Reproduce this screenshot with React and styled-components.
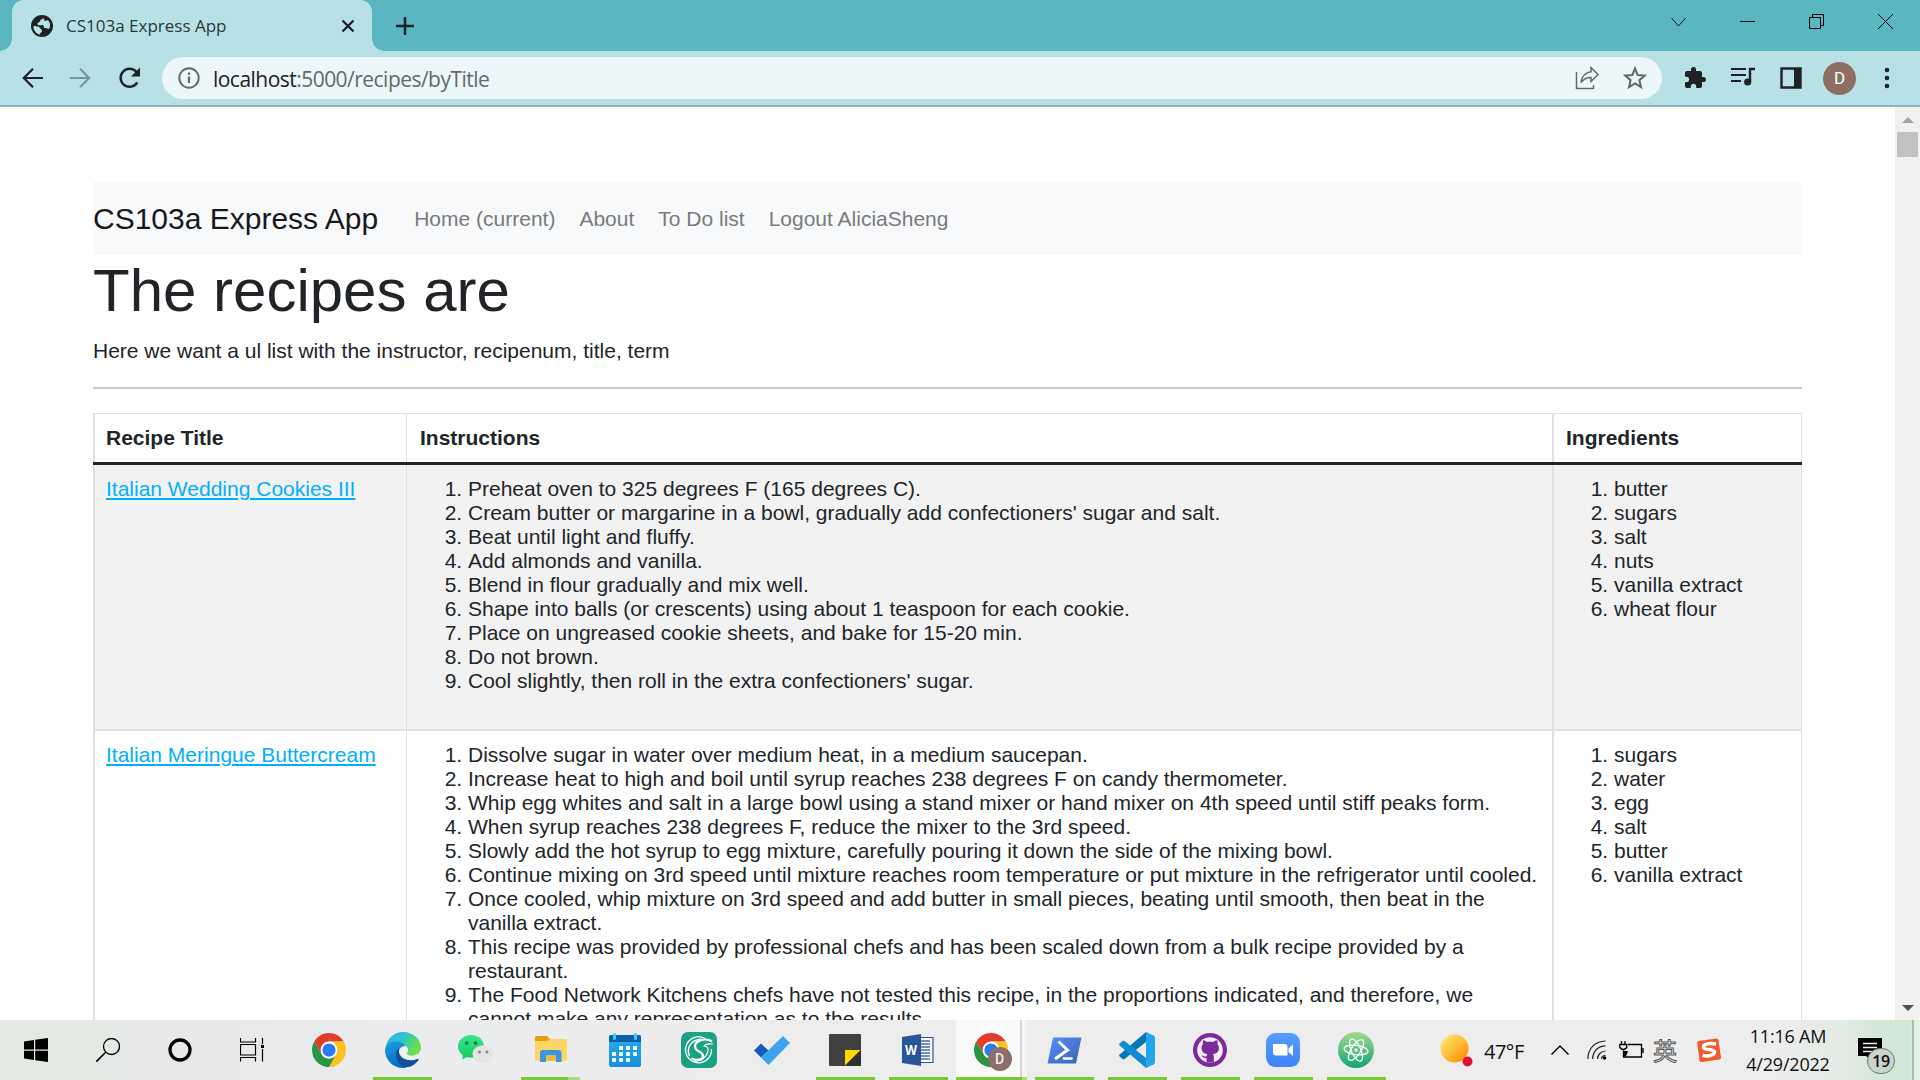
import React from "react";
import styled, { createGlobalStyle } from "styled-components";

const sans = `"Liberation Sans", Arial, sans-serif`;
const ui = `"Open Sans", "Noto Sans", sans-serif`;

const Global = createGlobalStyle`
  *, *::before, *::after { box-sizing: border-box; }
  html, body { margin: 0; padding: 0; overflow: hidden; background: #fff; }
`;

const Screen = styled.div`
  width: 1920px; height: 1080px; display: flex; flex-direction: column; overflow: hidden;
  color: #212529; font-family: ${sans};
`;

/* browser */
const TabStrip = styled.div`
  flex: none; height: 51px; background: #5ab7c1; display: flex; align-items: stretch; padding-left: 12px;
`;
const Tab = styled.div`
  position: relative; width: 360px; background: #b7e1e5; border-radius: 12px 12px 0 0;
  display: flex; align-items: center; padding: 0 17px 0 19px;
  &::before, &::after {
    content: ""; position: absolute; bottom: 0; width: 12px; height: 12px;
  }
  &::before { left: -12px; background: radial-gradient(circle at 0 0, transparent 11.5px, #b7e1e5 12px); }
  &::after { right: -12px; background: radial-gradient(circle at 100% 0, transparent 11.5px, #b7e1e5 12px); }
`;
const TabTitle = styled.span`
  flex: 1; margin-left: 13px; font: 17px/22px ${ui}; color: #26393c; white-space: nowrap;
`;
const NewTab = styled.div`margin-left: 23px; display: flex; align-items: center;`;
const WindowButtons = styled.div`
  margin-left: auto; display: flex; height: 43px; align-items: center; padding-right: 27px; gap: 54px;
`;
const Toolbar = styled.div`
  flex: none; height: 56px; background: #b7e1e5; border-bottom: 2px solid #90b3b7;
  display: flex; align-items: center; padding-left: 21px;
`;
const NavIcons = styled.div`display: flex; width: 141px; gap: 27px; align-items: center;`;
const Omnibox = styled.div`
  width: 1500px; height: 42px; border-radius: 21px; background: #ebf7f8;
  display: flex; align-items: center; padding: 0 15px 0 16px;
`;
const Url = styled.span`
  flex: 1; margin-left: 13px; font: 21px/28px ${ui}; letter-spacing: -0.53px; color: #5f6b6d; padding-top: 1px;
  b { font-weight: 400; color: #202124; }
`;
const Actions = styled.div`display: flex; align-items: center; gap: 24px; margin-left: 21px;`;
const Avatar = styled.span`
  width: 33px; height: 33px; border-radius: 50%; background: #8d6e63; color: #fff;
  display: grid; place-items: center; font: 17px/1 Roboto, sans-serif;
`;

/* page */
const Viewport = styled.div`flex: 1; min-height: 0; display: flex; overflow: hidden;`;
const Page = styled.main`
  flex: 1; height: 100%; overflow: hidden; padding: 75px 93px 0; font-size: 21px; line-height: 24px;
`;
const Navbar = styled.nav`
  height: 73px; background: #f7f9fb; display: flex; align-items: center; gap: 24px;
  color: #797b7d; white-space: nowrap;
`;
const Brand = styled.span`font-size: 30px; color: #17191b; margin-right: 12px;`;
const Title = styled.h1`margin: 0; font-size: 60px; font-weight: 400; line-height: 72px;`;
const Intro = styled.p`margin: 12px 0 0; line-height: 24px;`;
const Rule = styled.hr`margin: 24px 0 24px; border: 0; height: 2px; background: #c8c9ca;`;
const Table = styled.div`
  display: flex; flex-direction: column; border: 1px solid #dee2e6; border-left-width: 2px; border-bottom: 0;
`;
const Row = styled.div`
  display: grid; grid-template-columns: 312px 1147px 1fr;
  background: ${(p) => (p.$striped ? "#f2f2f2" : "#fff")};
  height: ${(p) => p.$height}px;
  border-bottom: 2px solid #dee2e6;
`;
const HeadRow = styled(Row)`height: 48px; border-bottom: 0; font-weight: 700;`;
const HeadRule = styled.div`height: 3px; margin: 0 -1px 0 -2px; background: #212529;`;
const Cell = styled.div`
  padding: 12px 12px 0 ${(p) => p.$pad || 12}px; border-right: ${(p) => p.$line || 0}px solid #dee2e6;
`;
const RecipeLink = styled.a`color: #01b0fb; text-decoration: underline; text-decoration-thickness: 2px; text-underline-offset: 2px;`;
const Steps = styled.ol`margin: 0; padding: 0 0 0 48px;`;
const Scrollbar = styled.div`
  width: 25px; background: #f1f1f1; display: flex; flex-direction: column; align-items: center;
  justify-content: space-between; padding: 10px 0 9px;
`;
const ScrollTop = styled.div`display: flex; flex-direction: column; align-items: center; gap: 9px; width: 100%;`;
const Thumb = styled.div`width: 21px; height: 25px; background: #c1c1c1;`;

/* taskbar */
const Taskbar = styled.footer`
  flex: none; height: 60px; display: flex;
  background: linear-gradient(90deg, #e3e9e3 0, #e7e9e6 180px, #ebecee 430px, #ededed 700px, #ededed 1780px, #e1ebe3 1845px, #d2e8d6 1880px, #d2e8d6 1910px, #e2f1e4 1914px);
`;
const System = styled.div`display: flex; align-items: center; width: 292px;`;
const SysButton = styled.div`width: 72px; display: grid; place-items: center;`;
const TaskButton = styled.div`
  position: relative; width: 73px; height: 60px; display: grid; place-items: center;
  &:nth-of-type(n + 2):nth-of-type(-n + 7) { margin-right: 1px; }
  &:nth-of-type(n + 8) { padding-right: 1px; }
  background: ${(p) => (p.$active ? "linear-gradient(90deg,transparent 1px,#f9f9f9 1px,#f9f9f9 65px,#d5d5d5 65px,#d5d5d5 67px,#f5f5f5 67px,#f5f5f5 72px,transparent 72px)" : "none")};
  svg { display: block; }
`;
const Running = styled.span`
  position: absolute; bottom: 0; left: ${(p) => (p.$wide ? 1 : 7)}px; width: ${(p) => (p.$wide ? 71 : 59)}px; height: 3px;
  background: ${(p) => (p.$split ? "linear-gradient(90deg,#76cb30 80%,#a9dd82 80%)" : p.$wide ? "linear-gradient(90deg,#76cb30 66px,#a9dd82 66px)" : "#76cb30")};
`;
const Tray = styled.div`margin-left: auto; display: flex; align-items: center; color: #111; font-family: ${ui};`;
const Temp = styled.span`font-size: 20px; letter-spacing: -0.5px; margin-left: 11px; width: 67px; padding-top: 2px;`;
const Lang = styled.span`
  font: 24px/1 "Noto Sans CJK SC", sans-serif; color: #fff; -webkit-text-stroke: 1px #555; margin-left: 9px;
`;
const Clock = styled.div`
  width: 100px; margin-left: 17px; text-align: center; font-size: 18px; line-height: 28px; letter-spacing: -0.2px; white-space: nowrap;
`;
const Notice = styled.div`position: relative; width: 62px; height: 60px; margin-left: 12px; padding: 18px 0 0 8px;`;
const Count = styled.span`
  position: absolute; left: 17px; top: 28px; width: 28px; height: 26px; border-radius: 13px; border: 1px solid #6d776f;
  background: #cbd3cd; display: grid; place-items: center; font-size: 16px; font-weight: 600; letter-spacing: -0.5px; line-height: 1;
`;
const DesktopEdge = styled.div`width: 8px; height: 60px; border-left: 2px solid #a9b9ac;`;

const Ico = ({ s = 24, w, h, vb, children, ...r }) => (
  <svg width={w || s} height={h || s} viewBox={vb || "0 0 24 24"} fill="none" {...r}>{children}</svg>
);

const ink = "#202124";

const ChromeLogo = () => (
  <Ico s={34} vb="0 0 34 34">
    <path d="M2.3 8.5A17 17 0 0 1 31.7 8.5H17L9.6 21.3Z" fill="#e33b2e" />
    <path d="M31.7 8.5A17 17 0 0 1 17 34l7.4-12.8L17 8.5Z" fill="#fcc31e" />
    <path d="M17 34A17 17 0 0 1 2.3 8.5l7.3 12.7A8.5 8.5 0 0 0 24.4 21.2Z" fill="#2a9344" />
    <circle cx="17" cy="17" r="8.4" fill="#fff" /><circle cx="17" cy="17" r="6.6" fill="#2b7bf0" />
  </Ico>
);

const EdgeLogo = () => (
  <Ico s={36} vb="0 0 36 36">
    <defs>
      <linearGradient id="ea" x1="0" y1="0" x2="1" y2=".4"><stop stopColor="#2fb3f0" /><stop offset=".5" stopColor="#2bc3d2" /><stop offset="1" stopColor="#6be04b" /></linearGradient>
      <linearGradient id="eb" x1="0" y1="0" x2=".3" y2="1"><stop stopColor="#1b9de2" /><stop offset="1" stopColor="#0a6cc8" /></linearGradient>
    </defs>
    <path d="M.5 16C2 6 9.500 0 18 0c10 0 18 7 18 15.500 0 5-4 8.500-9 8.500-4 0-6-1.500-5-3 2-3 0-8-6-10C10 9 4 11 .5 16Z" fill="url(#ea)" />
    <path d="M0 18C1 12 6 9 12 9.500c5 .5 9 3.500 9 6.500-4-2-8 2-7 7 1 6 7 9 13 8-3 3.500-6 5-9 5C8 36 0 28 0 18Z" fill="url(#eb)" />
    <path d="M14 16c-5 4-4 13 4 19 7 1.500 13-3 15.500-7 .5-1-.5-1.500-1.500-1-8 3.500-17 0-18-11Z" fill="#124f9d" />
    <path d="M20.500 14c-4 0-7 3-6.500 6 .5 5 6 8 11 8 4 0 7-1.500 8-2 1-.5 1.500-3-1-3.500-6 2.500-11 1-10-2 2-2 1-5-1.500-6.500Z" fill="#f0f0ef" />
  </Ico>
);

const WeChat = () => (
  <Ico w={37} h={30} vb="0 0 37 30">
    <defs><linearGradient id="wc" x1="0" y1="0" x2="0" y2="1"><stop stopColor="#3ee58c" /><stop offset="1" stopColor="#12c95f" /></linearGradient></defs>
    <path d="M13 0C5.800 0 0 5 0 11.500c0 3.500 2 6.700 5 9L4 24.500l5-2.500c7 2 17-1 17-10.500C26 5 20 0 13 0Z" fill="url(#wc)" />
    <ellipse cx="25" cy="19" rx="10.500" ry="8.800" fill="#e4e4e4" /><path d="M28 26l5 3-1-5Z" fill="#e4e4e4" />
    <circle cx="8.700" cy="8" r="1.800" fill="#087d3c" /><circle cx="17.500" cy="8" r="1.800" fill="#087d3c" />
    <circle cx="21.500" cy="17" r="1.500" fill="#888" /><circle cx="29" cy="17" r="1.500" fill="#888" />
  </Ico>
);

const Explorer = () => (
  <Ico w={32} h={28} vb="0 0 32 28">
    <path d="M0 1.500Q0 0 1.500 0H12l3 3v4H0Z" fill="#e2a10c" />
    <path d="M0 5h12l3-2h15.500Q32 3 32 4.500v19Q32 25 30.500 25h-29Q0 25 0 23.500Z" fill="#fdd465" />
    <path d="M5 16.500Q5 14 7.500 14h16.500q2.500 0 2.500 2.500V26h-5.500v-6.500H11V26H5Z" fill="#3c96dd" /><path d="M11 25v-5.500h10V25Z" fill="#efb73e" />
  </Ico>
);

const Calendar = () => (
  <Ico w={32} h={34} vb="0 0 32 34">
    <defs><linearGradient id="cal" x1="0" y1="0" x2="0" y2="1"><stop stopColor="#2ba9ea" /><stop offset="1" stopColor="#1791df" /></linearGradient></defs>
    <rect y="2" width="32" height="32" rx="2" fill="url(#cal)" /><path d="M0 9V4q0-2 2-2h28q2 0 2 2v5Z" fill="#0b5ea9" />
    <rect x="4" width="3" height="7" rx="1.500" fill="#39c9f3" /><rect x="25" width="3" height="7" rx="1.500" fill="#39c9f3" />
    {[[10, 13], [17, 13], [24, 13], [3, 19], [10, 19], [17, 19], [24, 19], [3, 25], [10, 25], [17, 25]].map(([x, y]) => (
      <rect key={x + "-" + y} x={x} y={y} width="4" height="4" rx=".7" fill="#f2fbff" />
    ))}
  </Ico>
);

const SLogo = () => (
  <Ico s={36} vb="0 0 36 36">
    <rect width="36" height="36" rx="7" fill="#1ba283" />
    <path d="M24 6.500A13 13 0 1 0 30.500 17" stroke="#fff" strokeWidth="1.300" />
    <path d="M31 9.500C25 5.500 14 8 14 14.500c0 5.500 8 4.500 8 9.500 0 4-6 5-11.500 2.500" stroke="#fff" strokeWidth="2.200" />
    <path d="M32 12c-4-.5-8 .5-9 2 4 0 5 3 3.500 7-2 5-7 9-14 8" stroke="#fff" strokeWidth="1.200" />
    <path d="M20 7C10 8 5 16 8.500 24" stroke="#fff" strokeWidth="1.400" />
  </Ico>
);

const Todo = () => (
  <Ico w={36} h={29} vb="0 0 36 29">
    <path d="M0 14.500 7 7.500l7.500 7L7 21.500Z" fill="#195abd" /><path d="M7 21.500 29 0l7 7-21.500 22Z" fill="#3fa2ee" />
  </Ico>
);

const Sticky = () => (
  <Ico s={32} vb="0 0 32 32">
    <rect width="32" height="32" rx="1" fill="#404040" /><path d="M16 16h15.500L16 31.500Z" fill="#fed900" /><path d="M32 16v15.500H16.500Z" fill="#303030" />
  </Ico>
);

const WordLetter = styled.text`font: 700 14px ${ui}; fill: #fff;`;
const Word = () => (
  <Ico s={32} vb="0 0 32 32">
    <path d="M18 3.500h13v25H18Z" fill="#fff" stroke="#2a5699" strokeWidth="1.200" />
    {[7, 10, 13, 16, 19, 22, 25].map((y) => <path key={y} d={`M19 ${y}h9`} stroke="#2a5699" strokeWidth="1.300" />)}
    <path d="M0 3 19 0v32L0 29Z" fill="#2a5699" /><WordLetter x="3" y="21" textLength="12" lengthAdjust="spacingAndGlyphs">W</WordLetter>
  </Ico>
);

const BadgeWrap = styled.span`position: relative; display: block; margin-left: -1px;`;
const MiniAvatar = styled.span`
  position: absolute; left: 14px; top: 14px; width: 24px; height: 24px; border-radius: 50%; background: #8a7067;
  color: #eee; display: grid; place-items: center; font: 500 14px/1 Roboto, sans-serif;
`;

const PowerShell = () => (
  <Ico w={35} h={27} vb="0 0 35 27">
    <defs><linearGradient id="ps" x1="0" y1="0" x2="1" y2="1"><stop stopColor="#5391fe" /><stop offset="1" stopColor="#3e62ad" /></linearGradient></defs>
    <path d="M6 .500h28.500L29 26.500H.5Z" fill="url(#ps)" />
    <path d="M11.500 4.500 20.500 13 8 22" stroke="#fff" strokeWidth="3" /><path d="M17 21.500h7.500" stroke="#fff" strokeWidth="2.500" strokeLinecap="round" />
  </Ico>
);

const Code = () => (
  <Ico s={36} vb="0 0 36 36">
    <path d="M27 0v10L5.500 27q-1 .7-2 0L.6 24.500q-1-1 0-2Z" fill="#0577b9" />
    <path d="M27 36V26L5.500 9q-1-.7-2 0L.6 11.500q-1 1 0 2Z" fill="#128bd0" />
    <path d="M27 0l7.500 3.500Q36 4.300 36 6v24q0 1.700-1.500 2.500L27 36Z" fill="#24a6ef" />
  </Ico>
);

const GitHub = () => (
  <Ico s={34} vb="0 0 34 34">
    <circle cx="17" cy="17" r="17" fill="#7a2a9b" /><circle cx="17" cy="17" r="12.800" fill="#f3ecf6" />
    <path d="M13.500 29.500v-4.500c-3 .5-4-1-5-2.500 2 .3 3 1.500 5 .8.200-1 .6-1.500 1-2-4-.6-6-2.500-6-6 0-1.500.5-3 1.500-4-.4-1.500-.2-3 .2-4 1.500 0 3 1 4 1.700 2-.5 4-.5 6 0 1-.7 2.500-1.700 4-1.700.4 1 .6 2.500.2 4 1 1 1.500 2.500 1.500 4 0 3.500-2 5.400-6 6 .7.700 1 1.700 1 3v5.200Z" fill="#7a2a9b" />
  </Ico>
);

const Zoom = () => (
  <Ico s={34} vb="0 0 34 34">
    <defs><linearGradient id="zm" x1="0" y1="0" x2="0" y2="1"><stop stopColor="#559dfd" /><stop offset="1" stopColor="#3f83fb" /></linearGradient></defs>
    <rect width="34" height="34" rx="9.500" fill="url(#zm)" />
    <path d="M7 11h11.500q3 0 3 3v8.500H10q-3 0-3-3Z" fill="#fff" /><path d="m22.500 15.500 4.500-4v11.500l-4.500-4Z" fill="#fff" />
  </Ico>
);

const Atom = () => (
  <Ico s={36} vb="0 0 36 36">
    <defs><linearGradient id="at" x1="0" y1="0" x2="0" y2="1"><stop stopColor="#a4d98a" /><stop offset="1" stopColor="#12a574" /></linearGradient></defs>
    <circle cx="18" cy="18" r="18" fill="url(#at)" />
    <g stroke="#fff" strokeWidth="1.300"><ellipse cx="18" cy="18" rx="12" ry="4.700" transform="rotate(8 18 18)" /><ellipse cx="18" cy="18" rx="12" ry="4.700" transform="rotate(66 18 18)" /><ellipse cx="18" cy="18" rx="12" ry="4.700" transform="rotate(123 18 18)" /></g>
    <circle cx="18" cy="18" r="1.700" fill="#fff" />
  </Ico>
);

const apps = [
  { el: <ChromeLogo /> }, { el: <EdgeLogo />, run: true }, { el: <WeChat /> }, { el: <Explorer />, run: true, split: true },
  { el: <Calendar /> }, { el: <SLogo /> }, { el: <Todo /> }, { el: <Sticky />, run: true }, { el: <Word />, run: true },
  { el: <BadgeWrap><ChromeLogo /><MiniAvatar>D</MiniAvatar></BadgeWrap>, run: true, active: true },
  { el: <PowerShell />, run: true }, { el: <Code />, run: true }, { el: <GitHub />, run: true }, { el: <Zoom />, run: true }, { el: <Atom />, run: true },
];

const recipes = [
  {
    title: "Italian Wedding Cookies III", height: 266,
    steps: [
      "Preheat oven to 325 degrees F (165 degrees C).",
      "Cream butter or margarine in a bowl, gradually add confectioners' sugar and salt.",
      "Beat until light and fluffy.", "Add almonds and vanilla.", "Blend in flour gradually and mix well.",
      "Shape into balls (or crescents) using about 1 teaspoon for each cookie.",
      "Place on ungreased cookie sheets, and bake for 15-20 min.", "Do not brown.",
      "Cool slightly, then roll in the extra confectioners' sugar.",
    ],
    items: ["butter", "sugars", "salt", "nuts", "vanilla extract", "wheat flour"],
  },
  {
    title: "Italian Meringue Buttercream", height: 340,
    steps: [
      "Dissolve sugar in water over medium heat, in a medium saucepan.",
      "Increase heat to high and boil until syrup reaches 238 degrees F on candy thermometer.",
      "Whip egg whites and salt in a large bowl using a stand mixer or hand mixer on 4th speed until stiff peaks form.",
      "When syrup reaches 238 degrees F, reduce the mixer to the 3rd speed.",
      "Slowly add the hot syrup to egg mixture, carefully pouring it down the side of the mixing bowl.",
      "Continue mixing on 3rd speed until mixture reaches room temperature or put mixture in the refrigerator until cooled.",
      "Once cooled, whip mixture on 3rd speed and add butter in small pieces, beating until smooth, then beat in the vanilla extract.",
      "This recipe was provided by professional chefs and has been scaled down from a bulk recipe provided by a restaurant.",
      "The Food Network Kitchens chefs have not tested this recipe, in the proportions indicated, and therefore, we cannot make any representation as to the results.",
    ],
    items: ["sugars", "water", "egg", "salt", "butter", "vanilla extract"],
  },
];

export default function App() {
  return (
    <Screen>
      <Global />
      <TabStrip>
        <Tab>
          <Ico s={22} vb="0 0 22 22">
            <circle cx="11" cy="11" r="11" fill={ink} />
            <path d="M12.500 2.800c-.5 1.700-3 1.200-3.500 3.200s-2.500 1-2.500 3 2.500 1 4.500 1 2 1.500 2 3h2c1 0 1.500 1 3 1 2-4 1-8-2-9-1 2-3 1-3.500-2.200ZM2.500 11c2 0 6 .5 6.500 2s2 1 2 3-2 1-2 3.500C5 19 2.200 15 2.500 11Z" fill="#b7e1e5" />
          </Ico>
          <TabTitle>CS103a Express App</TabTitle>
          <Ico s={14} vb="0 0 14 14"><path d="m1.500 1.500 11 11m0-11-11 11" stroke={ink} strokeWidth="2.300" /></Ico>
        </Tab>
        <NewTab><Ico s={20} vb="0 0 20 20"><path d="M10 1v18M1 10h18" stroke={ink} strokeWidth="2.500" /></Ico></NewTab>
        <WindowButtons>
          <Ico s={15} vb="0 0 15 15"><path d="m.5 4 7 8 7-8" stroke="#111" /></Ico>
          <Ico s={15} vb="0 0 15 15"><path d="M0 7.500h15" stroke="#000" /></Ico>
          <Ico s={15} vb="0 0 15 15"><path d="M.5 3.500h11v11H.5zM3.500 3V.500h11v11H12" stroke="#000" /></Ico>
          <Ico s={15} vb="0 0 15 15"><path d="m0 0 15 15M15 0 0 15" stroke="#000" /></Ico>
        </WindowButtons>
      </TabStrip>
      <Toolbar>
        <NavIcons>
          <Ico s={22} vb="0 0 22 22"><path d="M22 11H3M12 1.800 2.800 11 12 20.200" stroke={ink} strokeWidth="2.200" /></Ico>
          <Ico s={22} vb="0 0 22 22"><path d="M0 11h19M10 1.800l9.200 9.200-9.200 9.200" stroke="#7a979b" strokeWidth="2.200" /></Ico>
          <Ico s={22} vb="0 0 22 22"><path d="M18.300 15.500A9 9 0 1 1 17.500 5" stroke={ink} strokeWidth="2.400" /><path d="M21 .500v9h-9Z" fill={ink} /></Ico>
        </NavIcons>
        <Omnibox>
          <Ico s={22} vb="0 0 22 22"><circle cx="11" cy="11" r="9.700" stroke="#5f6b6d" strokeWidth="2" /><path d="M11 9.500V16M11 5.500v2.200" stroke="#5f6b6d" strokeWidth="2.200" /></Ico>
          <Url><b>localhost</b>:5000/recipes/byTitle</Url>
          <Ico s={24}>
            <path d="M1.500 6v16.500h17V19" stroke="#5f6b6d" strokeWidth="1.500" />
            <path d="M16 1.500 23 8.500 16 15.500V11.500C11 11.500 8.500 13 6 16.500 6.800 10.500 10 6.500 16 5.700Z" stroke="#5f6b6d" strokeWidth="1.500" />
          </Ico>
          <Ico s={24} style={{ marginLeft: 24 }}><path d="M12 2.500 14.700 9l7 .6-5.300 4.600 1.600 6.900-6-3.700-6 3.700 1.600-6.900L2.300 9.600l7-.6Z" stroke="#5f6b6d" strokeWidth="2" /></Ico>
        </Omnibox>
        <Actions>
          <Ico s={24}><path fill={ink} d="M20.500 11H19V7c0-1.100-.9-2-2-2h-4V3.500a2.500 2.500 0 0 0-5 0V5H4c-1.100 0-2 .9-2 2v3.800h1.500c1.500 0 2.700 1.200 2.700 2.700S5 16.200 3.500 16.200H2V20c0 1.100.9 2 2 2h3.800v-1.500c0-1.500 1.200-2.700 2.700-2.700s2.700 1.200 2.700 2.700V22H17c1.100 0 2-.9 2-2v-4h1.500a2.500 2.500 0 0 0 0-5Z" /></Ico>
          <Ico s={24}><path d="M0 3h15M0 9h15M0 15h10" stroke={ink} strokeWidth="2.200" /><path d="M19 16V3h5" stroke={ink} strokeWidth="2.400" /><circle cx="16.700" cy="16" r="3.600" fill={ink} /></Ico>
          <Ico s={22} vb="0 0 22 22" style={{ marginLeft: 1 }}><path d="M1.500 1.500h19v19h-19z" stroke={ink} strokeWidth="2.400" /><path d="M14 1h7v20h-7z" fill={ink} /></Ico>
          <Avatar style={{ marginLeft: -3 }}>D</Avatar>
          <Ico w={6} h={22} vb="0 0 6 22" style={{ marginLeft: 4 }}><g fill={ink}><circle cx="3" cy="3" r="2.300" /><circle cx="3" cy="11" r="2.300" /><circle cx="3" cy="19" r="2.300" /></g></Ico>
        </Actions>
      </Toolbar>

      <Viewport>
        <Page>
          <Navbar>
            <Brand>CS103a Express App</Brand>
            <span>Home (current)</span><span>About</span><span>To Do list</span><span>Logout AliciaSheng</span>
          </Navbar>
          <Title>The recipes are</Title>
          <Intro>Here we want a ul list with the instructor, recipenum, title, term</Intro>
          <Rule />
          <Table>
            <HeadRow><Cell $line={1} $pad={11}>Recipe Title</Cell><Cell $line={2} $pad={13}>Instructions</Cell><Cell>Ingredients</Cell></HeadRow>
            <HeadRule />
            {recipes.map((r, i) => (
              <Row key={r.title} $striped={i % 2 === 0} $height={r.height}>
                <Cell $line={1} $pad={11}><RecipeLink>{r.title}</RecipeLink></Cell>
                <Cell $line={2} $pad={13}><Steps>{r.steps.map((s) => <li key={s}>{s}</li>)}</Steps></Cell>
                <Cell><Steps>{r.items.map((s) => <li key={s}>{s}</li>)}</Steps></Cell>
              </Row>
            ))}
          </Table>
        </Page>
        <Scrollbar>
          <ScrollTop><Ico w={12} h={6} vb="0 0 12 6"><path d="m6 0 6 6H0Z" fill="#a3a3a3" /></Ico><Thumb /></ScrollTop>
          <Ico w={12} h={6} vb="0 0 12 6"><path d="m6 6 6-6H0Z" fill="#505050" /></Ico>
        </Scrollbar>
      </Viewport>

      <Taskbar>
        <System>
          <SysButton><Ico s={24}><path d="M0 3.500 10 2v9.500H0ZM11.200 1.800 24 0v11.500H11.200ZM0 12.700h10V22L0 20.500ZM11.200 12.700H24V24l-12.800-1.800Z" fill="#000" /></Ico></SysButton>
          <SysButton><Ico s={24}><circle cx="15.500" cy="8.500" r="8" stroke="#000" strokeWidth="1.300" /><path d="m9.700 14.300-9.400 9.400" stroke="#000" strokeWidth="1.600" /></Ico></SysButton>
          <SysButton><Ico s={24}><circle cx="12" cy="12" r="10" stroke="#000" strokeWidth="3.300" /></Ico></SysButton>
          <SysButton><Ico s={24}><path d="M.5 0v4h15V0M.5 6.500h15v10.500H.5ZM.5 23.500v-4h15v4M22.500 0v6M22.500 11v12.500" stroke="#000" strokeWidth="1.200" /><path d="M21 7h3v3h-3z" fill="#000" /></Ico></SysButton>
        </System>
        {apps.map((a, i) => (
          <TaskButton key={i} $active={a.active}>{a.el}{a.run && <Running $split={a.split} $wide={a.active} />}</TaskButton>
        ))}
        <Tray>
          <Ico s={33} vb="0 0 33 33">
            <defs><linearGradient id="sun" x1="0" y1="0" x2="1" y2="1"><stop offset=".15" stopColor="#ffe169" /><stop offset=".8" stopColor="#ff9c0e" /></linearGradient></defs>
            <circle cx="14.500" cy="14.500" r="14" fill="url(#sun)" /><circle cx="27.500" cy="27.500" r="5" fill="#e01034" />
          </Ico>
          <Temp>47°F</Temp>
          <Ico w={18} h={10} vb="0 0 18 10"><path d="m.5 9.500 8.500-8.500 8.500 8.500" stroke="#000" strokeWidth="1.400" /></Ico>
          <Ico s={20} vb="0 0 20 20" style={{ marginLeft: 18 }}><path d="M.8 19C1 8 8 1.500 18.500 1M5.500 19C6 11 11 6 18.500 5.800M10.500 19c0-4 3.500-8 8-8M14.500 19c0-2 1.500-3.500 4-3.500" stroke="#222" strokeWidth="1.200" /><circle cx="17.500" cy="18" r="1.800" fill="#000" /></Ico>
          <Ico w={25} h={18} vb="0 0 25 18" style={{ marginLeft: 12 }}><path d="M9 3.500h13.500v12.500H4.500V9.500M2.500 0v3M6 0v3M.8 3.500h7v3q-3.500 4-7 0ZM24 7v5" stroke="#000" strokeWidth="1.300" /><path d="M5 10h4l-2 5.500H5Z" fill="#000" /></Ico>
          <Lang>英</Lang>
          <Ico s={24} style={{ marginLeft: 20 }}><path d="M2 3 19 .5q2-.2 2.300 1.500L24 19q.2 2-1.500 2.400L5 24q-2 .2-2.500-1.500L.2 5Q0 3.300 2 3Z" fill="#f15b2c" /><path d="M19 6C12 4.500 6 6 6.500 9.500c.5 3 10.500 1 11 4.500.3 3.500-7 4.500-12 3.500" stroke="#fff" strokeWidth="3.500" /></Ico>
          <Clock>11:16 AM<br />4/29/2022</Clock>
          <Notice>
            <Ico w={24} h={24}><path d="M0 0h24v18H14v5l-6-5H0Z" fill="#000" /><path d="M5 5.500h14M5 9.500h14M5 13.500h9" stroke="#eee" strokeWidth="1.300" /></Ico>
            <Count>19</Count>
          </Notice>
          <DesktopEdge />
        </Tray>
      </Taskbar>
    </Screen>
  );
}
